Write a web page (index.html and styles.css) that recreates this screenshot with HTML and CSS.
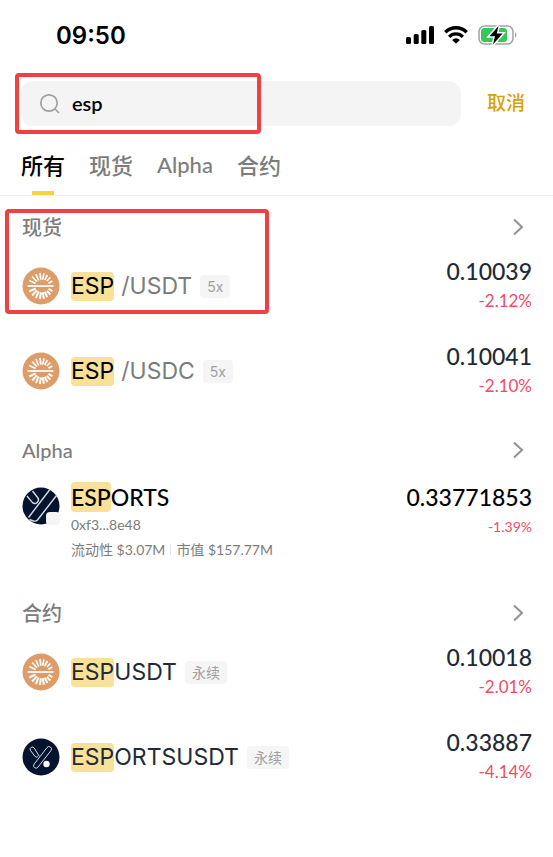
FILE: index.html
```html
<!DOCTYPE html>
<html lang="zh-CN">
<head>
    <meta charset="UTF-8">
    <meta name="viewport" content="width=device-width, initial-scale=1.0">
    <title>搜索</title>
    <link rel="stylesheet" href="styles.css">
</head>
<body>

    <svg class="sprite" aria-hidden="true">
        <symbol id="coin-esp" viewBox="0 0 38 38">
            <circle cx="19" cy="19" r="18.5" fill="#dd9c68"/>
            <g stroke="#fff" stroke-width="1.7" fill="none">
                <path d="M13.6 16.5L7.2 13.5M14.9 14.6L10.1 9.5M16.7 13.5L13.9 7M18.9 12.7L17.9 6M20.7 12.7L21.9 6.3M22.7 13.2L25.3 8M24.9 14L28.3 10.5M26.5 16.2L30.4 13.9"/>
                <path d="M13.6 21.5L7.2 24.5M14.9 23.4L10.1 28.5M16.7 24.5L13.9 31M18.9 25.3L17.9 32M20.7 25.3L21.9 31.7M22.7 24.8L25.3 30M24.9 24L28.3 27.5M26.5 21.8L30.4 24.1" stroke-width="2"/>
                <path d="M5.5 19H31.5"/>
            </g>
        </symbol>
        <symbol id="coin-esports" viewBox="0 0 38 38">
            <circle cx="19" cy="19" r="18.5" fill="#04142f"/>
            <g fill="none" stroke="#d5dbe5" stroke-width="1">
                <path d="M25 9.6L12 26.3a2.4 2.4 0 0 0 4 2.8L29 12.5a2.4 2.4 0 0 0-4-2.9z"/>
                <path d="M17.4 18.5L12.2 10a2.2 2.2 0 0 0-3.8 2.2l4.2 5.8a2.4 2.4 0 0 0 3.4 .6"/>
            </g>
            <circle cx="24.5" cy="26" r="3.2" fill="#fff"/>
        </symbol>
        <symbol id="coin-alpha" viewBox="0 0 38 38">
            <circle cx="19" cy="19" r="18.5" fill="#04142f"/>
            <g fill="none" stroke="#d5dbe5" stroke-width="1.4">
                <path d="M27.5 3L6.5 30.5M34.5 8.5L15.5 33Q14 34.5 11.5 34L7.5 32.5"/>
                <path d="M5 9L10.5 15.6Q13 17.6 15.2 15.4T16 11L10.5 4"/>
            </g>
            <rect x="24" y="25" width="14" height="13" rx="4" fill="#f5f5f5"/>
        </symbol>
        <symbol id="chevron" viewBox="0 0 12 18">
            <path d="M2 1.5L10 9L2 16.5" fill="none" stroke="#929292" stroke-width="2"/>
        </symbol>
    </svg>

    <div class="status-bar">
        <span class="clock">09:50</span>
        <div class="status-icons">
            <svg width="28" height="18" viewBox="0 0 28 18">
                <rect x="0" y="11" width="5" height="7" rx="1.5"/>
                <rect x="7.7" y="8" width="5" height="10" rx="1.5"/>
                <rect x="15.3" y="4" width="5" height="14" rx="1.5"/>
                <rect x="23" y="0" width="5" height="18" rx="1.5"/>
            </svg>
            <svg width="24" height="18" viewBox="0 0 24 18">
                <g fill="none" stroke="#000" stroke-width="3.4">
                    <path d="M1.3 6.2a15.2 15.2 0 0 1 21.4 0"/>
                    <path d="M5.2 10.8a9.4 9.4 0 0 1 13.6 0"/>
                </g>
                <path d="M8.2 14a5.2 5.2 0 0 1 7.6 0L12 17.8z"/>
            </svg>
            <svg width="40" height="22" viewBox="0 0 40 22">
                <rect x="1" y="2" width="34" height="18" rx="5.5" fill="#fff" stroke="#a3a3a3" stroke-width="1.5"/>
                <rect x="3" y="4" width="26" height="14" rx="3.5" fill="#34c759"/>
                <path d="M37 8q2.8 3 0 6z" fill="#a3a3a3"/>
                <path d="M20.5 2L11.5 12.2H17L15 20.5L24.6 9.6H18.8z" stroke="#fff" stroke-width="3" paint-order="stroke"/>
            </svg>
        </div>
    </div>

    <div class="search-bar">
        <label class="search-box">
            <svg width="22" height="22" viewBox="0 0 22 22" fill="none" stroke="#a0a0a0" stroke-width="1.7">
                <circle cx="10" cy="10" r="8.2"/>
                <path d="M16 16L20 20"/>
            </svg>
            <input type="text" value="esp" aria-label="搜索">
        </label>
        <button class="cancel">取消</button>
        <div class="mark mark-search"></div>
    </div>

    <nav class="tabs">
        <button class="tab active">所有</button>
        <button class="tab">现货</button>
        <button class="tab">Alpha</button>
        <button class="tab">合约</button>
    </nav>

    <main>
        <section class="group">
            <a class="group-title" href="#">现货<svg width="12" height="18"><use href="#chevron"/></svg></a>
            <div class="row">
                <svg class="coin"><use href="#coin-esp"/></svg>
                <div class="pair"><mark>ESP</mark><span class="quote">/USDT</span></div>
                <span class="tag">5x</span>
                <div class="values">
                    <div class="price">0.10039</div>
                    <div class="change">-2.12%</div>
                </div>
            </div>
            <div class="row">
                <svg class="coin"><use href="#coin-esp"/></svg>
                <div class="pair"><mark>ESP</mark><span class="quote">/USDC</span></div>
                <span class="tag">5x</span>
                <div class="values">
                    <div class="price">0.10041</div>
                    <div class="change">-2.10%</div>
                </div>
            </div>
            <div class="mark mark-result"></div>
        </section>

        <section class="group">
            <a class="group-title" href="#">Alpha<svg width="12" height="18"><use href="#chevron"/></svg></a>
            <div class="row token">
                <svg class="coin"><use href="#coin-alpha"/></svg>
                <div class="details">
                    <div class="symbol"><mark>ESP</mark>ORTS</div>
                    <div class="address">0xf3...8e48</div>
                    <div class="stats"><span>流动性 $3.07M</span><span>市值 $157.77M</span></div>
                </div>
                <div class="values">
                    <div class="price">0.33771853</div>
                    <div class="change">-1.39%</div>
                </div>
            </div>
        </section>

        <section class="group">
            <a class="group-title" href="#">合约<svg width="12" height="18"><use href="#chevron"/></svg></a>
            <div class="row futures">
                <svg class="coin"><use href="#coin-esp"/></svg>
                <div class="pair"><mark>ESP</mark>USDT</div>
                <span class="tag">永续</span>
                <div class="values">
                    <div class="price">0.10018</div>
                    <div class="change">-2.01%</div>
                </div>
            </div>
            <div class="row futures">
                <svg class="coin"><use href="#coin-esports"/></svg>
                <div class="pair"><mark>ESP</mark>ORTSUSDT</div>
                <span class="tag">永续</span>
                <div class="values">
                    <div class="price">0.33887</div>
                    <div class="change">-4.14%</div>
                </div>
            </div>
        </section>
    </main>

</body>
</html>
```

FILE: styles.css
```css
* {
    box-sizing: border-box;
}

body {
    margin: 0;
    background-color: #fff;
    color: #000;
    font-family: Inter, "Noto Sans CJK SC", sans-serif;
}

button {
    border: none;
    padding: 0;
    background: none;
    font-family: inherit;
    cursor: pointer;
}

.sprite {
    position: absolute;
    width: 0;
    height: 0;
}

.status-bar {
    display: flex;
    align-items: center;
    justify-content: space-between;
    height: 70px;
    padding: 0 35px 0 56px;
}

.clock {
    font-size: 24px;
    font-weight: 600;
}

.status-icons {
    display: flex;
    align-items: center;
    gap: 10px;
}

.search-bar {
    position: relative;
    display: flex;
    align-items: center;
    gap: 26px;
    padding: 11px 28px 11px 21px;
}

.search-box {
    display: flex;
    flex: 1;
    align-items: center;
    gap: 11px;
    height: 45px;
    padding: 0 18px;
    background-color: #f4f4f4;
    border-radius: 12px;
}

.search-box input {
    flex: 1;
    min-width: 0;
    border: none;
    outline: none;
    padding: 0 0 2px;
    background: none;
    font-family: Lato, sans-serif;
    font-size: 20px;
    font-weight: 600;
}

.cancel {
    color: #d9a010;
    font-size: 19px;
    font-weight: 500;
    line-height: 28px;
}

/* red highlight boxes */
.mark {
    position: absolute;
    border: 4px solid #f04040;
    border-radius: 4px;
    pointer-events: none;
}

.mark-search {
    top: 3px;
    left: 15px;
    width: 246px;
    height: 61px;
}

.mark-result {
    top: 13px;
    left: 5px;
    width: 264px;
    height: 105px;
}

.tabs {
    display: flex;
    gap: 24px;
    height: 59px;
    padding: 0 21px;
    border-bottom: 1px solid #eee;
}

.tab {
    position: relative;
    padding-bottom: 4px;
    color: #7c7c7c;
    font-family: Lato, "Noto Sans CJK SC", sans-serif;
    font-size: 22px;
    font-weight: 500;
}

.tab.active {
    color: #000;
}

.tab.active::after {
    content: "";
    position: absolute;
    bottom: 0;
    left: 50%;
    width: 22px;
    height: 4px;
    margin-left: -11px;
    background-color: #f5d33d;
}

.group {
    position: relative;
    padding: 21px 21px 0 22px;
}

.group:first-child {
    padding-top: 15px;
}

.group-title {
    display: flex;
    align-items: center;
    justify-content: space-between;
    height: 32px;
    padding-right: 8px;
    padding-bottom: 1px;
    color: #7c7c7c;
    font-family: Lato, "Noto Sans CJK SC", sans-serif;
    font-size: 20px;
    font-weight: 500;
    text-decoration: none;
}

.row {
    display: flex;
    align-items: center;
    padding: 13px 0 12px;
}

.coin {
    flex: none;
    width: 38px;
    height: 38px;
    margin-right: 11px;
}

.pair {
    font-size: 23px;
    line-height: 29px;
}

mark {
    display: inline-block;
    background-color: #f9e19a;
    border-radius: 4px;
    color: inherit;
}

.quote {
    margin-left: 7px;
    color: #7c7c7c;
}

.tag {
    height: 23px;
    margin-left: 8px;
    padding: 0 7px;
    background-color: #f5f5f5;
    border-radius: 4px;
    color: #a0a0a0;
    font-size: 14px;
    line-height: 23px;
}

.values {
    margin-left: auto;
    font-family: Lato, sans-serif;
    line-height: 30px;
    text-align: right;
}

.price {
    color: #222a35;
    font-size: 23px;
    font-weight: 500;
}

.change {
    color: #f04c64;
    font-size: 17px;
}

.futures .pair {
    color: #222a35;
}

.token {
    align-items: flex-start;
    padding: 16px 0 14px;
}

.token .coin {
    margin-top: 5px;
}

.symbol {
    font-family: Lato, sans-serif;
    font-size: 23px;
    font-weight: 500;
    line-height: 30px;
}

.address {
    color: #7c7c7c;
    font-family: Lato, sans-serif;
    font-size: 14px;
    line-height: 26px;
}

.stats {
    display: flex;
    align-items: center;
    color: #7c7c7c;
    font-family: Lato, "Noto Sans CJK SC", sans-serif;
    font-size: 14px;
    line-height: 24px;
}

.stats span + span::before {
    content: "";
    display: inline-block;
    width: 1px;
    height: 11px;
    margin: 0 5px;
    background-color: #e6e6e6;
}

.token .price {
    color: #000;
}

.token .change {
    font-size: 14px;
}
```
